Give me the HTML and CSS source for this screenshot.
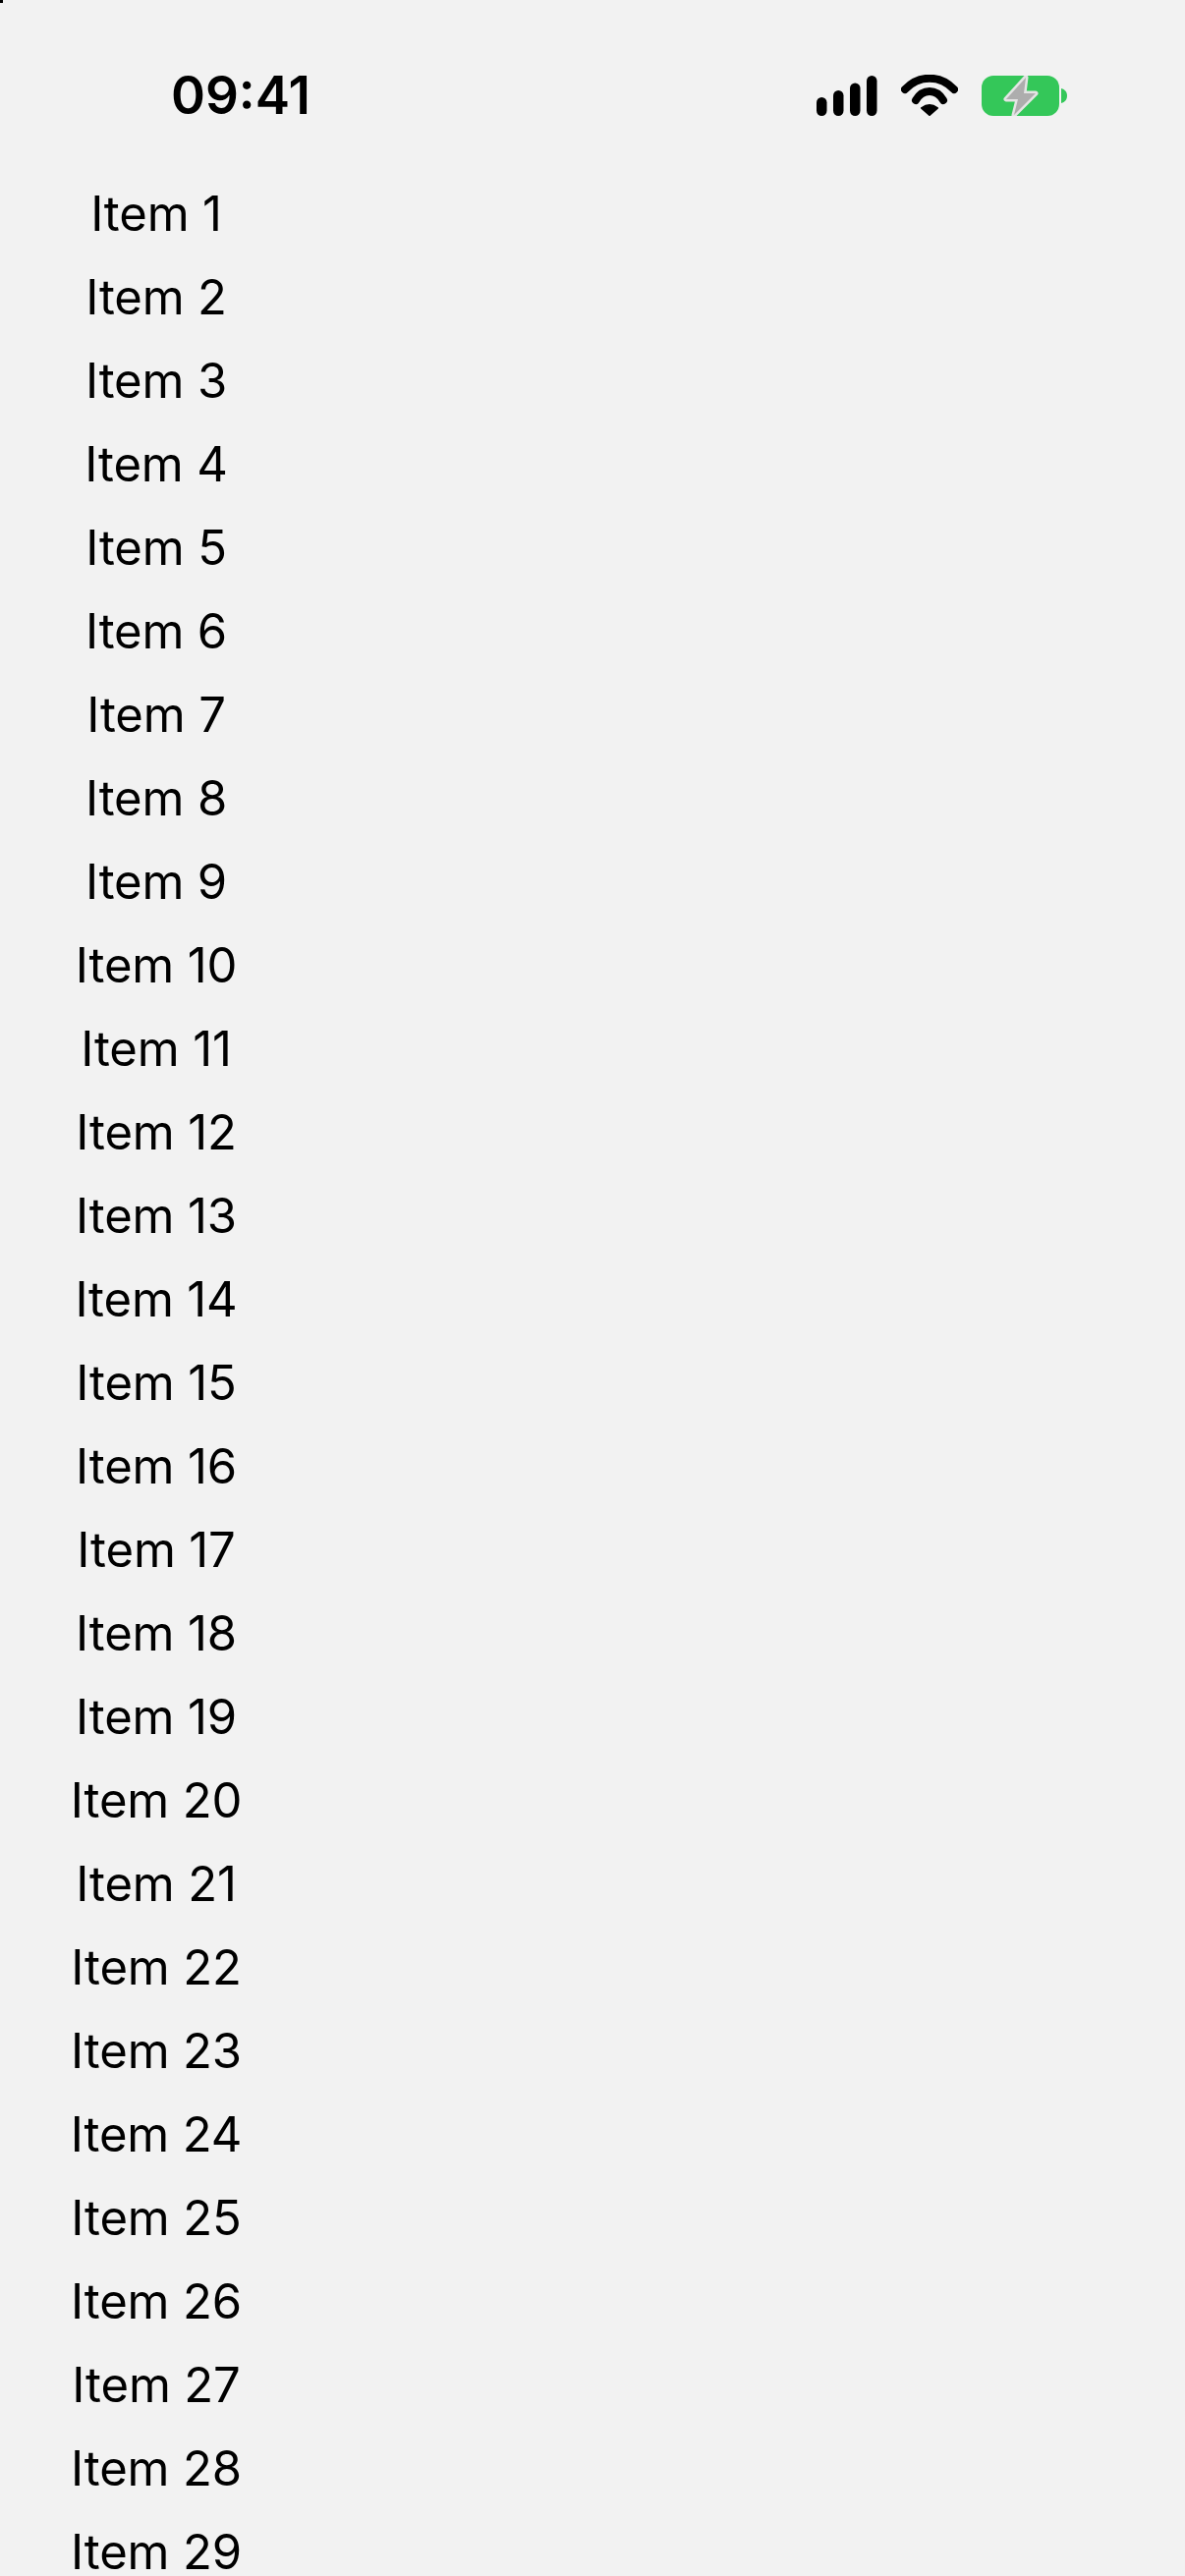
FILE: index.html
```html
<!DOCTYPE html>
<html lang="en">
<head>
    <meta charset="UTF-8">
    <meta name="viewport" content="width=device-width, initial-scale=1.0">
    <title>Items</title>
    <link rel="stylesheet" href="styles.css">
</head>
<body>
    <div class="corner-mark"></div>

    <header class="status-bar">
        <div class="time">09:41</div>
        <div class="status-icons">
            <!-- signal -->
            <svg class="icon-signal" width="62" height="41" viewBox="0 0 62 41">
                <rect x="0" y="22" width="10.5" height="19" rx="5.25" fill="#000"/>
                <rect x="17" y="15" width="10.5" height="26" rx="5.25" fill="#000"/>
                <rect x="34" y="7.5" width="10.5" height="33.5" rx="5.25" fill="#000"/>
                <rect x="51" y="0" width="10.5" height="41" rx="5.25" fill="#000"/>
            </svg>
            <!-- wifi -->
            <svg class="icon-wifi" width="58" height="42" viewBox="0 0 58 42">
                <path d="M4 15 C18 0 40 0 54 15" fill="none" stroke="#000" stroke-width="8" stroke-linecap="round"/>
                <path d="M15 26 C22 14 36 14 43 26" fill="none" stroke="#000" stroke-width="8" stroke-linecap="round"/>
                <path d="M29 41 L21 34 Q29 28 37 34 Z" fill="#000" stroke="#000" stroke-width="2" stroke-linejoin="round"/>
            </svg>
            <!-- battery, charging -->
            <svg class="icon-battery" width="87" height="41" viewBox="0 0 87 41">
                <rect x="0" y="0" width="79" height="41" rx="12" fill="#34c759"/>
                <path d="M81 13 C85 14 87 17 87 20.5 C87 24 85 27 81 28 Z" fill="#34c759"/>
                <path d="M45 2 L25 24 H37 L33 40 L55 18 H43 Z" fill="#adadad" stroke="#e4e4e4" stroke-width="5" stroke-linejoin="round" paint-order="stroke"/>
            </svg>
        </div>
    </header>

    <ul class="item-list">
        <li>Item 1</li>
        <li>Item 2</li>
        <li>Item 3</li>
        <li>Item 4</li>
        <li>Item 5</li>
        <li>Item 6</li>
        <li>Item 7</li>
        <li>Item 8</li>
        <li>Item 9</li>
        <li>Item 10</li>
        <li>Item 11</li>
        <li>Item 12</li>
        <li>Item 13</li>
        <li>Item 14</li>
        <li>Item 15</li>
        <li>Item 16</li>
        <li>Item 17</li>
        <li>Item 18</li>
        <li>Item 19</li>
        <li>Item 20</li>
        <li>Item 21</li>
        <li>Item 22</li>
        <li>Item 23</li>
        <li>Item 24</li>
        <li>Item 25</li>
        <li>Item 26</li>
        <li>Item 27</li>
        <li>Item 28</li>
        <li>Item 29</li>
    </ul>
</body>
</html>
```

FILE: styles.css
```css
html, body {
    height: 100%;
}

body {
    margin: 0;
    overflow: hidden;
    position: relative;
    font-family: 'Inter', sans-serif;
    color: #000;
    background-color: #f2f2f2;
}

.corner-mark {
    position: absolute;
    top: 0;
    left: 0;
    width: 3px;
    height: 3px;
    background-color: #000;
}

.status-bar {
    display: flex;
    justify-content: space-between;
    align-items: center;
    height: 175px;
    padding: 19px 120px 0 174px;
    box-sizing: border-box;
}

.time {
    font-size: 53px;
    font-weight: 600;
    line-height: 1;
}

.status-icons {
    display: flex;
    align-items: center;
    gap: 24px;
}

.status-icons svg {
    display: block;
}

.item-list {
    list-style: none;
    margin: 0;
    padding: 0;
    width: 318px;
}

.item-list li {
    height: 85px;
    line-height: 85px;
    font-size: 49px;
    letter-spacing: -0.15px;
    text-align: center;
}
```
